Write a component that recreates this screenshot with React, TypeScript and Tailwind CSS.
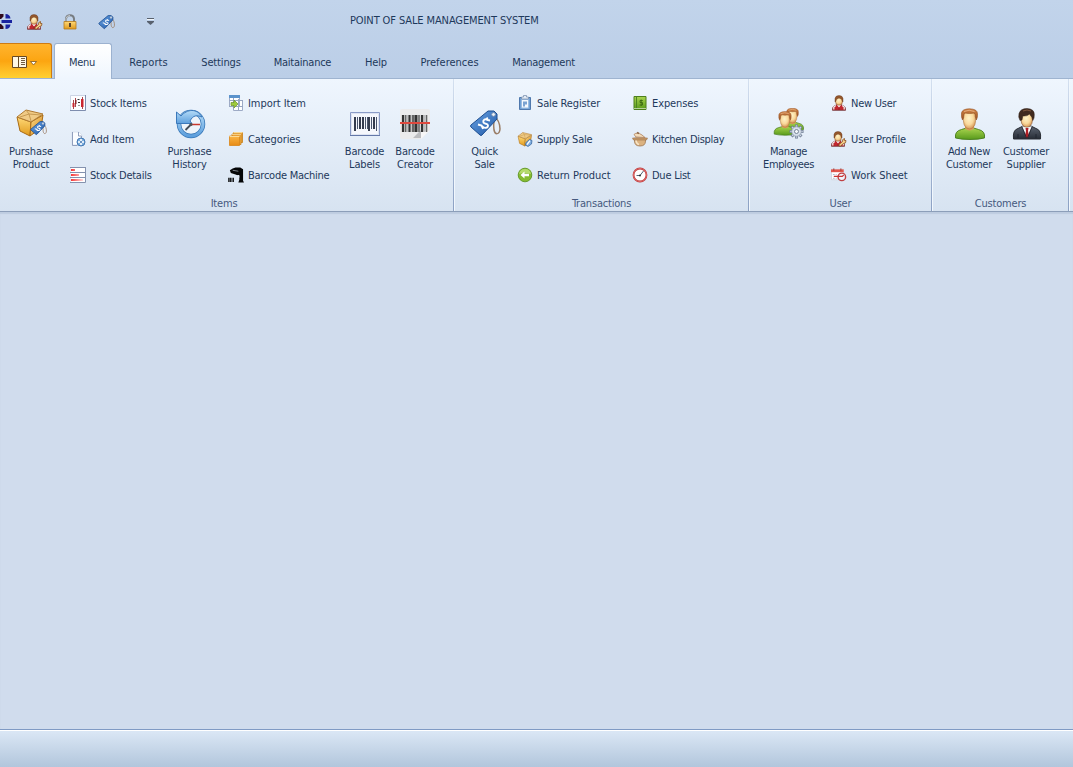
import React from 'react';

const Defs = () => (
  <svg width="0" height="0" className="absolute" aria-hidden="true">
    <defs>
      <linearGradient id="gold" x1="0" y1="0" x2="0" y2="1"><stop offset="0" stopColor="#ffd978" /><stop offset="1" stopColor="#e09a1c" /></linearGradient>
      <linearGradient id="orange" x1="0" y1="0" x2="0" y2="1"><stop offset="0" stopColor="#fbb544" /><stop offset="1" stopColor="#e78b17" /></linearGradient>
      <linearGradient id="boxSide" x1="0" y1="0" x2="1" y2="1"><stop offset="0" stopColor="#ffe08c" /><stop offset="1" stopColor="#cf7f14" /></linearGradient>
      <linearGradient id="blue" x1="0" y1="0" x2="1" y2="1"><stop offset="0" stopColor="#6ba4e4" /><stop offset="1" stopColor="#1e57a6" /></linearGradient>
      <linearGradient id="sky" x1="0" y1="0" x2="0" y2="1"><stop offset="0" stopColor="#b5dcf8" /><stop offset="1" stopColor="#5d9fdd" /></linearGradient>
      <linearGradient id="green" x1="0" y1="0" x2="0" y2="1"><stop offset="0" stopColor="#a9d44e" /><stop offset="1" stopColor="#589a1c" /></linearGradient>
      <radialGradient id="skin" cx=".45" cy=".4" r=".65"><stop offset="0" stopColor="#fff3c8" /><stop offset=".55" stopColor="#f9d99c" /><stop offset="1" stopColor="#cf8a48" /></radialGradient>
      <linearGradient id="hair" x1="0" y1="0" x2="0" y2="1"><stop offset="0" stopColor="#d18446" /><stop offset="1" stopColor="#9a5120" /></linearGradient>
      <linearGradient id="suit" x1="0" y1="0" x2="0" y2="1"><stop offset="0" stopColor="#5e6673" /><stop offset="1" stopColor="#262b35" /></linearGradient>
      <linearGradient id="redFade" x1="0" y1="0" x2="1" y2="0"><stop offset="0" stopColor="#f53535" /><stop offset="1" stopColor="#ffdcdc" /></linearGradient>
    </defs>
  </svg>
);

const TagShape = ({ stroke = 1 }: { stroke?: number }) => (
  <>
    <path d="M25 8c5 4 6 8 6 13-.5 6-5 6-6 1-.5-4-1-7 1-11" fill="none" stroke="#9a7d66" strokeWidth="1.5" />
    <path d="M19 3h6l3 3v5L13 27q-1 1-2 0l-9-8q-1-1 0-2z" fill="url(#blue)" stroke="#1d4e91" strokeWidth={stroke} strokeLinejoin="round" />
    <circle cx="24.500" cy="6.500" r="1.800" fill="#eef4fb" stroke="#8797ac" strokeWidth=".8" />
    <path d="M18.500 12c-2.500-2-5 .5-4 2.500 1 2 4.500 .5 4.500 3 0 2.500-4 3.500-6 .5M9 16.500l3.500 1 1.500 3.500M18 9.500l.5 2.500 2.500 .5" fill="none" stroke="#fff" strokeWidth="1.900" />
  </>
);
const Tag32 = () => <svg width="32" height="32" viewBox="0 0 32 32"><TagShape /></svg>;
const Tag16 = () => <svg width="17" height="17" viewBox="0 0 32 32"><TagShape stroke={1.5} /></svg>;

const BoxShape = () => (
  <>
    <path d="M2 9l14 5-1 14L5 23z" fill="url(#gold)" stroke="#a96a14" strokeLinejoin="round" />
    <path d="M16 14l12-7-2 13-11 8z" fill="url(#boxSide)" stroke="#a96a14" strokeLinejoin="round" />
    <path d="M2 9l9-7 17 4-12 8z" fill="#f0cb86" stroke="#b07a30" strokeLinejoin="round" />
    <path d="M5 9l9-3 12 1M11 2l3 4 2 7" fill="none" stroke="#c79a52" strokeWidth="1" />
  </>
);
const Box32 = () => (
  <svg width="32" height="32" viewBox="0 0 32 32">
    <BoxShape />
    <g transform="translate(15 12) scale(.53)"><TagShape stroke={1.5} /></g>
  </svg>
);
const Box16 = () => (
  <svg width="16" height="16" viewBox="0 0 32 32">
    <g transform="translate(0 1) scale(1.04)"><BoxShape /></g>
    <path d="M25 17l5 2-1 7-7 5-5-3 1-5z" fill="#7faee0" stroke="#35659f" strokeWidth="1.5" /><path d="M26 19l-6 8" stroke="#fff" strokeWidth="2.500" />
  </svg>
);

const Stock = () => (
  <svg width="16" height="16" viewBox="0 0 16 16">
    <path d="M.5.5h15v15H.5z" fill="#fcfdff" stroke="#ccd4e4" /><path d="M15.500 0v15.500H0" fill="none" stroke="#7e8dae" />
    <path d="M3.500 5v9M5.500 3v9M12.500 2v12" stroke="#9e3038" strokeWidth=".9" /><path d="M2.500 8h2v4h-2zM11 4h2.500v8H11z" fill="#c92630" /><path d="M5 5h1.500v4H5z" fill="#8c252c" />
    <path d="M7.500 4.500h2M8 7.500h2M8.500 10.500h1" stroke="#333" />
  </svg>
);
const AddDoc = () => (
  <svg width="16" height="16" viewBox="0 0 16 16">
    <path d="M2 1h7l3 3v10H2z" fill="#fbfdff" stroke="#dae3ef" /><path d="M2.500 1v13.500h5M8.500 1v4h3v2" fill="none" stroke="#8795b6" strokeWidth=".9" />
    <circle cx="11" cy="11" r="4" fill="#7aaede" stroke="#4579b4" /><path d="M11 8v6M8 11h6" stroke="#fff" strokeWidth="1.600" /><circle cx="11" cy="11" r="1" fill="#396eab" />
  </svg>
);
const Details = () => (
  <svg width="16" height="16" viewBox="0 0 16 16">
    <path d="M1 0h14v16H1z" fill="#fff" /><path d="M15.500 0v15.500H0M0 5.500h15M0 10.500h15M0 .5h15" stroke="#8492ae" fill="none" />
    <path d="M1 2h4v2H1zM1 7h8v2H1zM1 12h12v2H1z" fill="url(#redFade)" />
  </svg>
);
const History = () => (
  <svg width="32" height="32" viewBox="0 0 32 32">
    <circle cx="17" cy="16" r="12" fill="#edf4fb" /><circle cx="17" cy="16" r="12" fill="none" stroke="#3575b6" strokeWidth="4.500" /><circle cx="17" cy="16" r="12" fill="none" stroke="url(#sky)" strokeWidth="3" />
    <path d="M2.500 4l4.500 4C13 1 23 0 28 9c-5-2-9-2-12 4l2 2.500H2.500z" fill="url(#sky)" stroke="#3a78bb" strokeLinejoin="round" />
    <path d="M17 16.500h9" stroke="#c8382e" strokeWidth="1.500" /><path d="M11.500 22l6-6" stroke="#444d59" strokeWidth="1.800" /><circle cx="17" cy="16.500" r="1.500" fill="#555" />
  </svg>
);
const Import = () => (
  <svg width="16" height="16" viewBox="0 0 16 16">
    <path d="M1.500 1.500h10v10h-10zM5.500 5.500h9v10h-9z" fill="#fff" stroke="#9eabc6" /><path d="M1 0h11v3H1z" fill="#5b93cc" />
    <path d="M1 5.500h14M1 11.500h14M5.500 3v12M10.500 4v11" stroke="#98a6c1" fill="none" /><path d="M3 7.500h3V5l4 4-4 4v-2.500H3z" fill="#9fcb3c" stroke="#6a9030" strokeWidth=".7" />
  </svg>
);
const Categories = () => (
  <svg width="16" height="16" viewBox="0 0 16 16">
    <path d="M5.500 1.500h9v10h-9z" fill="#efa83c" stroke="#c67d18" strokeWidth=".8" /><path d="M4 3h9v10.500H4z" fill="#f3b048" stroke="#c67d18" strokeWidth=".8" /><path d="M1.500 5h10v9.500h-10z" fill="url(#orange)" stroke="#d98518" strokeWidth=".8" /><path d="M1.500 5.500h10M4 3.300h9M5.500 1.500h9" stroke="#fde2a4" strokeWidth=".9" />
  </svg>
);
const Scanner = () => (
  <svg width="17" height="16" viewBox="0 0 17 16">
    <path d="M2 3l3-2 3-1h5l3 2v12l1 2h-6l1-3V9L8 7.500 3 6z" fill="#050607" /><path d="M9.500 8h2.500v3L11 10z" fill="#dbe5f2" /><path d="M5 3l6 1" stroke="#dae5f2" strokeWidth=".6" /><path d="M1 11v4.500M3 11v4.500M5.500 11v4.500" stroke="#000" strokeWidth="1.500" />
  </svg>
);
const BarcodeLabel = () => (
  <svg width="32" height="32" viewBox="0 0 32 32">
    <path d="M1.500 4.500h29v23h-29z" fill="#f5f7fc" stroke="#8a9bc6" /><path d="M1 27.500h30" stroke="#6478a8" /><path d="M2.500 5.500h27v21h-27z" fill="none" stroke="#dde4f2" />
    <path d="M6 9v14M11 9v12M14 9v12M20 9v14M25 9v12" stroke="#343c4e" strokeWidth="2" /><path d="M8.500 9v12M16.500 9v12M18.500 9v12M22.500 9v12M27.500 9v14" stroke="#4b566d" />
  </svg>
);
const BarcodeScan = () => (
  <svg width="32" height="32" viewBox="0 0 32 32">
    <path d="M3 1h26q2 0 2 2v19l-9 9H3q-2 0-2-2V3q0-2 2-2z" fill="#ebebec" /><path d="M14 30l8-8v8z" fill="#bcbdc0" /><path d="M22 23h8l-8 8z" fill="#f7f7f8" />
    <path d="M4 7v17M10.500 7v17M17 7v17M23 7v17" stroke="#333" strokeWidth="2.200" /><path d="M6.500 7v17M13.500 7v17M15 7v17M20 7v17M27.500 7v17" stroke="#666" strokeWidth="1.600" /><path d="M8 7v17M18.500 7v17M25 7v17" stroke="#909090" />
    <path d="M1 15h30" stroke="#df493e" strokeWidth="2" />
  </svg>
);
const Clipboard = () => (
  <svg width="16" height="16" viewBox="0 0 16 16">
    <path d="M2.500 2.500h11v12h-11z" fill="#6fa0d6" stroke="#4f78ad" /><path d="M4.500 4.500h7v8.500h-7z" fill="#f5f9ff" stroke="#9bbce0" /><path d="M4.500 4V2h2V.5h3V2h2v2z" fill="#e3ebf5" stroke="#738aaa" strokeWidth=".7" /><path d="M6 6.500h4v3H8v2H6z" fill="#7ba3d2" />
  </svg>
);
const Return = () => (
  <svg width="16" height="16" viewBox="0 0 16 16"><circle cx="8" cy="8" r="6.800" fill="#85bb30" stroke="#5f9622" strokeWidth=".9" /><path d="M2 7q1-5 6-5t6 5q-6-2-12 0z" fill="#b5da6c" /><path d="M3.500 8l4-3.500v2.200H12v2.600H7.500v2.200z" fill="#fff" /></svg>
);
const Expense = () => (
  <svg width="16" height="16" viewBox="0 0 16 16"><path d="M2 1.500h12v13H2z" fill="url(#green)" stroke="#4d7f1c" /><path d="M4.500 1v13" stroke="#4e8422" /><path d="M2 13.500h12" stroke="#dfe9d2" strokeWidth=".7" /><path d="M10.800 5.500H8v2h2.500v2.500H7.500M9.200 4.500v6.500" fill="none" stroke="#3d6b14" strokeWidth=".9" /></svg>
);
const Pot = () => (
  <svg width="16" height="16" viewBox="0 0 16 16">
    <path d="M2.500 7h11v3q0 5-5.500 5t-5.500-5z" fill="#dbb280" stroke="#9d7650" strokeWidth=".8" /><path d="M4 8.500q0 4 3 5" fill="none" stroke="#f8e5c6" strokeWidth="1.600" /><path d="M.5 7h15l-1 2h-13z" fill="#c99d6c" stroke="#9b7048" strokeWidth=".6" />
    <path d="M2 3.500q3-3 8 .5l3 2.500-9-.5z" fill="#f3ddbd" stroke="#ae805a" strokeWidth=".8" /><path d="M5 1.500l2 1" stroke="#8d684a" strokeWidth="1.500" />
  </svg>
);
const Clock = () => (
  <svg width="16" height="16" viewBox="0 0 16 16"><circle cx="8" cy="8" r="6.500" fill="#fff" stroke="#b83638" strokeWidth="1.800" /><circle cx="8" cy="8" r="6.500" fill="none" stroke="#e87572" strokeWidth=".8" /><path d="M11.500 4L8 8.500H4.500" fill="none" stroke="#3d5267" strokeWidth=".9" /><circle cx="8" cy="8.500" r=".9" fill="#222" /></svg>
);

const SmallPerson = () => (
  <>
    <path d="M1.500 15.300q-.5-4 3-5l2-1h3l2 1q3.500 1 3 5z" fill="#c2262e" stroke="#6d3236" strokeWidth=".8" /><path d="M2.800 14.500v-2.500l2-1.500M13.200 14.500v-2.500l-2-1.500" stroke="#efe9e8" strokeWidth="1.300" fill="none" /><path d="M6 10l2 2.500 2-2.500z" fill="#fff" />
    <ellipse cx="8" cy="5.900" rx="3.500" ry="4.300" fill="url(#skin)" stroke="#9b653c" strokeWidth=".6" /><path d="M4 7V3.500Q4.500 .5 8 .5t4 3V7l-.9-1-.4-1.800-2.700-1.200-2.500 1.200-.6 2z" fill="#96582c" stroke="#5f3318" strokeWidth=".4" /><path d="M8 12.500V15" stroke="#8c2026" strokeWidth=".8" />
  </>
);
const User16 = () => <svg width="16" height="16" viewBox="0 0 16 16"><SmallPerson /></svg>;
const UserEdit = () => (
  <svg width="16" height="16" viewBox="0 0 16 16"><g transform="translate(-1 0)"><SmallPerson /></g><path d="M8 13.500l3.500-3 .3-2 1.700-1v2l1.500 0-.5 2.300-2 .7-3 2.500-1.500 0z" fill="#f5cf8a" stroke="#8a5020" strokeWidth=".8" strokeLinejoin="round" /></svg>
);
const Work = () => (
  <svg width="17" height="16" viewBox="0 0 17 16">
    <path d="M.5 2h12.500v11H.5z" fill="#fff" stroke="#ccd2da" strokeWidth=".8" /><path d="M0 2h13.500v3H0z" fill="#e2564c" /><path d="M3 1v2.500M10.500 1v2.500" stroke="#9b3c36" /><path d="M2 7.500h4M2 11.500h4" stroke="#b3bac8" strokeDasharray="2 1" />
    <circle cx="11.500" cy="10" r="4" fill="#eef5fc" stroke="#bf4043" strokeWidth="1.500" /><path d="M3 9.500h9l1.500-1.500" stroke="#c93332" strokeWidth="1.200" fill="none" />
  </svg>
);

const PersonShape = () => (
  <>
    <path d="M2.500 30q-1-7 6-8.500l5-1.500h7l5 1.500q7 1.500 6 8.500-6 1.500-14.500 1.500T2.500 30z" fill="url(#green)" stroke="#467b1b" strokeWidth=".9" />
    <path d="M12 16h9v4.500q-4.500 4-9 0z" fill="#d99a58" />
    <path d="M10.300 8q0-5 6.200-5t6.200 5v4q0 5-3 8-3 2-6.400 0-3-3-3-8z" fill="url(#skin)" stroke="#a8703c" strokeWidth=".5" />
    <path d="M9.500 12q-1.500-3-1-7 .5-4 8-4.200 8 .2 8 5 .3 4-1.200 6.200l-1-3.500q.6-2-1.300-3.500-4.500 1-8.700 0l-1.300 1.500q0 3.500-1.500 5.500z" fill="url(#hair)" stroke="#935024" strokeWidth=".6" /><path d="M11 3.500q5-2.500 10.500 0" fill="none" stroke="#e4ad7e" />
  </>
);
const Customer = () => <svg width="32" height="32" viewBox="0 0 32 32"><PersonShape /></svg>;
const gearTeeth = [0, 45, 90, 135];
const Employees = () => (
  <svg width="32" height="32" viewBox="0 0 32 32">
    <g transform="translate(7.500 -0.300) scale(.73)"><PersonShape /></g><g transform="translate(-.7 3) scale(.77)"><PersonShape /></g>
    {gearTeeth.map((angle) => <path key={angle} d="M23.500 16.500v14" transform={`rotate(${angle} 23.500 23.500)`} stroke="#6d7a91" strokeWidth="2.900" />)}
    {gearTeeth.map((angle) => <path key={angle} d="M23.500 17.300v12.400" transform={`rotate(${angle} 23.500 23.500)`} stroke="#cfd9e6" strokeWidth="1.500" />)}
    <circle cx="23.500" cy="23.500" r="4.800" fill="#d7e0eb" stroke="#8491a6" strokeWidth=".7" /><circle cx="23.500" cy="23.500" r="2" fill="#f4f8fc" stroke="#6d7a91" strokeWidth=".9" />
  </svg>
);
const Supplier = () => (
  <svg width="32" height="32" viewBox="0 0 32 32">
    <path d="M3.500 31q-1-9 4.500-10.500L13 18h8l5 2.500q5.500 1.500 4.500 10.500z" fill="url(#suit)" stroke="#292d34" /><path d="M12 18.500l5 11 5-11z" fill="#f5f6f8" /><path d="M15.500 20h3l-.5 3 1 5-2 2.500-2-2.500 1-5z" fill="#b01e25" /><path d="M12 19l4.500 11M22 19l-4.500 11M8 26v4M26 26v4" stroke="#1d222c" strokeWidth=".8" fill="none" />
    <path d="M11 8q0-4 5.800-4t5.700 4v4q0 4-3 6.500-2.700 1.500-5.500 0-3-2.500-3-6.500z" fill="url(#skin)" stroke="#875b40" strokeWidth=".6" /><path d="M10 12.500Q8 9 9 5.500 10.500.5 17 .5q7.500.5 7.300 6 .2 4-1.500 6l-1-3.500q-1.300-1-2-3-3 2.500-7 2l-.8 4z" fill="#402a1f" stroke="#2d1c14" strokeWidth=".5" /><path d="M13 3q4-2 8 0" fill="none" stroke="#80583f" />
  </svg>
);

const Logo = () => (
  <svg width="13" height="17" viewBox="0 0 13 17"><path d="M0 1h3.500v2.500L1 6H0zM0 11h1l2.500 2.500V16H0z" fill="#310a1c" /><path d="M5.500 1q4.500 0 5 4.500h-5zM1.500 7H12v3H1.500zM5.500 11.500h5Q10 16 5.500 16z" fill="#1923a0" /></svg>
);
const Lock = () => (
  <svg width="14" height="16" viewBox="0 0 14 16"><path d="M3 8V4.500Q3.500 1.200 7 1.200t4 3.300V8" fill="none" stroke="#777c80" strokeWidth="1.900" /><path d="M3 7V4.500Q3.500 1.500 7 1.500" fill="none" stroke="#d9dddf" strokeWidth=".8" /><path d="M1 7.500h12v7.500H1z" fill="url(#gold)" stroke="#b57a1c" strokeWidth=".8" /><path d="M6 9h2v4H6z" fill="#58422a" /></svg>
);

const Big = ({ icon, lines, className = '' }: { icon: React.ReactNode; lines: string[]; className?: string }) => (
  <button className={`flex shrink-0 flex-col items-center pt-[29px] ${className}`}>
    <span className="mb-[5px] h-8 w-8">{icon}</span>
    {lines.map((line) => <span key={line} className="h-[13px] whitespace-nowrap leading-[13px]">{line}</span>)}
  </button>
);
const Small = ({ icon, children, className = '' }: { icon: React.ReactNode; children: React.ReactNode; className?: string }) => (
  <button className={`flex h-9 items-center gap-1 whitespace-nowrap ${className}`}><span className="flex h-4 w-4 shrink-0">{icon}</span><span className="pt-0.5">{children}</span></button>
);
const Stack = ({ children, className = '' }: { children: React.ReactNode; className?: string }) => <div className={`flex shrink-0 flex-col pt-1.5 ${className}`}>{children}</div>;
const Group = ({ label, children, className = '' }: { label: string; children: React.ReactNode; className?: string }) => (
  <section className={`flex shrink-0 flex-col ${className}`}>
    <div className="flex h-[118px]">{children}</div>
    <div className="text-center leading-[14px] tracking-[-0.2px] text-[#45597e]">{label}</div>
  </section>
);
const Divider = () => <div className="flex h-full w-0.5 shrink-0"><i className="w-px bg-linear-to-b from-[#d4e0f0] to-[#8ba0c3]" /><i className="w-px bg-[#f1f7fd]" /></div>;
const Tab = ({ children, className }: { children: React.ReactNode; className: string }) => <button className={`h-9 shrink-0 pt-[5px] text-center ${className}`}>{children}</button>;

export default function App() {
  return (
    <div className="flex h-[767px] w-[1073px] flex-col overflow-hidden bg-[#d0dced] font-['DejaVu_Sans_Condensed','DejaVu_Sans',sans-serif] text-[11px] tracking-[-0.25px] text-[#1e395b] [font-stretch:condensed]">
      <Defs />
      <header className="h-[78px] shrink-0 bg-linear-to-b from-[#c2d4eb] to-[#bbcee7]">
        <div className="flex h-[43px]">
          <div className="flex w-[350px] shrink-0 items-start pt-[13px]">
            <span className="w-[27px]"><Logo /></span><span className="w-9 pt-px"><UserEdit /></span><span className="w-[35px] pt-px"><Lock /></span><span className="w-12 pt-px"><Tag16 /></span>
            <svg width="9" height="10" viewBox="0 0 9 10" className="mt-1"><path d="M1 1.500h7" stroke="#58616e" /><path d="M1 2.500h7" stroke="#f4f7fa" /><path d="M1 4h7v1L4.500 8 1 5z" fill="#58616e" /></svg>
          </div>
          <h1 className="pt-3.5 leading-[14px] tracking-[-0.11px]">POINT OF SALE MANAGEMENT SYSTEM</h1>
        </div>
        <nav className="flex h-9">
          <button className="flex h-[35px] w-[52px] shrink-0 items-center rounded-tr-[3px] border-t border-r border-[#ce7b13] bg-linear-to-b from-[#ffb42c] via-[#fca510] to-[#ffd030] pl-3 pt-0.5">
            <svg width="26" height="15" viewBox="0 0 26 15"><path d="M.5 1.500h14v11H.5z" fill="#fff7e4" stroke="#684923" /><path d="M6.500 2v10" stroke="#684923" /><path d="M9 3.500h4M9 5.500h4M9 7.500h4M9 9.500h4" stroke="#715b41" /><path d="M18.500 6.500h6l-3 3.500z" fill="#fff" stroke="#7e551c" strokeWidth=".8" /></svg>
          </button>
          <button className="ml-0.5 h-9 w-[58px] shrink-0 rounded-t-[3px] border border-b-0 border-[#9cb2d0] bg-linear-to-b from-white to-[#eff6fe] pr-0.5 pt-1">Menu</button>
          <Tab className="w-[73px] tracking-[0.1px]">Reports</Tab><Tab className="w-[72px] tracking-[-0.15px]">Settings</Tab><Tab className="w-[91px] tracking-[-0.25px]">Maitainance</Tab><Tab className="w-[56px] tracking-[-0.2px]">Help</Tab><Tab className="w-[91px] tracking-[0px]">Preferences</Tab><Tab className="w-[97px] tracking-[-0.25px]">Management</Tab>
        </nav>
      </header>
      <div className="flex h-px shrink-0"><i className="w-[54px] bg-[#9fb4d0]" /><i className="w-px bg-[#9cb2d0]" /><i className="w-14 bg-[#eff6fe]" /><i className="flex-1 bg-[#9fb4d0]" /></div>
      <main className="flex h-[133px] shrink-0 border-b border-[#8c9eb9] bg-linear-to-b from-[#eff6fe] to-[#d7e3f1]">
        <Group label="Items" className="w-[453px] [&>div:last-child]:pr-[5px]">
          <Big icon={<Box32 />} lines={['Purshase', 'Product']} className="w-[62px] tracking-[-0.12px]" />
          <Stack className="ml-2 w-[90px]"><Small className="tracking-[-0.13px]" icon={<Stock />}>Stock Items</Small><Small className="tracking-[-0.05px]" icon={<AddDoc />}>Add Item</Small><Small icon={<Details />}>Stock Details</Small></Stack>
          <Big icon={<History />} lines={['Purshase', 'History']} className="w-[58px] pl-px tracking-[-0.12px]" />
          <Stack className="ml-2.5 w-[111px]"><Small className="tracking-[-0.05px]" icon={<Import />}>Import Item</Small><Small className="tracking-[-0.1px]" icon={<Categories />}>Categories</Small><Small icon={<Scanner />}>Barcode Machine</Small></Stack>
          <Big icon={<BarcodeLabel />} lines={['Barcode', 'Labels']} className="w-[51px] tracking-[-0.15px]" />
          <Big icon={<BarcodeScan />} lines={['Barcode', 'Creator']} className="w-[50px] tracking-[-0.15px]" />
        </Group>
        <Divider />
        <Group label="Transactions" className="w-[293px]">
          <Big icon={<Tag32 />} lines={['Quick', 'Sale']} className="w-[58px] pl-px" />
          <Stack className="ml-1 w-[115px]"><Small className="tracking-[-0.15px]" icon={<Clipboard />}>Sale Register</Small><Small icon={<Box16 />}>Supply Sale</Small><Small className="tracking-[0.02px]" icon={<Return />}>Return Product</Small></Stack>
          <Stack><Small className="tracking-[-0.1px]" icon={<Expense />}>Expenses</Small><Small className="tracking-[-0.3px]" icon={<Pot />}>Kitchen Display</Small><Small icon={<Clock />}>Due List</Small></Stack>
        </Group>
        <Divider />
        <Group label="User" className="w-[181px]">
          <Big icon={<Employees />} lines={['Manage', 'Employees']} className="w-[77px] tracking-[-0.35px]" />
          <Stack className="ml-1"><Small icon={<User16 />}>New User</Small><Small className="tracking-[-0.12px]" icon={<UserEdit />}>User Profile</Small><Small className="tracking-[0px]" icon={<Work />}>Work Sheet</Small></Stack>
        </Group>
        <Divider />
        <Group label="Customers" className="w-[135px]">
          <Big icon={<Customer />} lines={['Add New', 'Customer']} className="ml-2 w-14" />
          <Big icon={<Supplier />} lines={['Customer', 'Supplier']} className="w-[58px]" />
        </Group>
        <Divider />
      </main>
      <div className="flex-1 bg-[#d0dced] shadow-[inset_0_2px_1px_#becce0]" />
      <footer className="h-[38px] shrink-0 border-t border-[#7f9ac4] bg-linear-to-b from-[#dce8f6] to-[#b2c6dc] shadow-[inset_0_1px_#fff]" />
    </div>
  );
}
